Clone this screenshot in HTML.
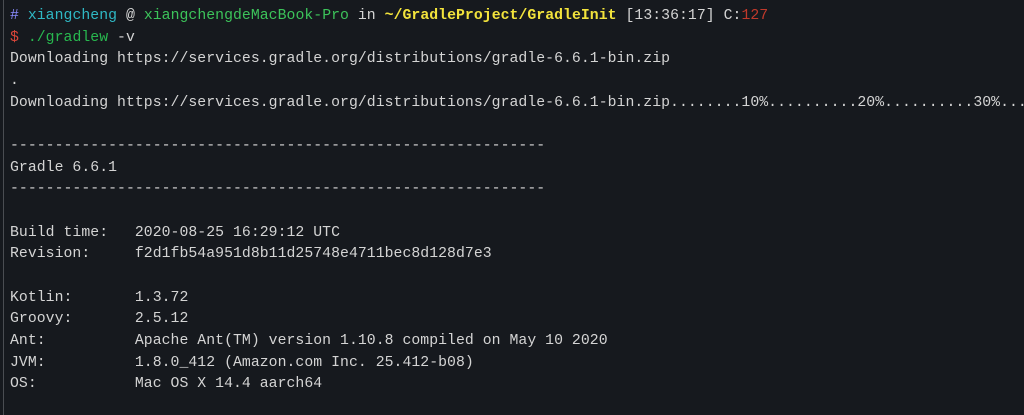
<!DOCTYPE html>
<html><head><style>
html,body{margin:0;padding:0;background:#16191e;width:1024px;height:415px;overflow:hidden}
.bar{position:absolute;left:3px;top:0;width:1px;height:415px;background:#4a4d52}
pre{position:absolute;left:10px;top:6px;margin:0;font-family:"Liberation Mono",monospace;font-size:14.8px;line-height:21.65px;color:#d4d4d4;letter-spacing:0.04px;white-space:pre}
.b{color:#8a8cff}.c{color:#2fb8c4}.g{color:#3cc35a}.y{color:#f2e33c;font-weight:bold}.r{color:#d9463a}.rd{color:#c0392b}.gr{color:#28b84f}
</style></head><body><div class="bar"></div><pre><span class="b">#</span> <span class="c">xiangcheng</span> @ <span class="g">xiangchengdeMacBook-Pro</span> in <span class="y">~/GradleProject/GradleInit</span> [13:36:17] C:<span class="rd">127</span>
<span class="r">$</span> <span class="gr">./gradlew</span> -v
Downloading https://services.gradle.org/distributions/gradle-6.6.1-bin.zip
.
Downloading https://services.gradle.org/distributions/gradle-6.6.1-bin.zip........10%..........20%..........30%...

------------------------------------------------------------
Gradle 6.6.1
------------------------------------------------------------

Build time:   2020-08-25 16:29:12 UTC
Revision:     f2d1fb54a951d8b11d25748e4711bec8d128d7e3

Kotlin:       1.3.72
Groovy:       2.5.12
Ant:          Apache Ant(TM) version 1.10.8 compiled on May 10 2020
JVM:          1.8.0_412 (Amazon.com Inc. 25.412-b08)
OS:           Mac OS X 14.4 aarch64</pre></body></html>
